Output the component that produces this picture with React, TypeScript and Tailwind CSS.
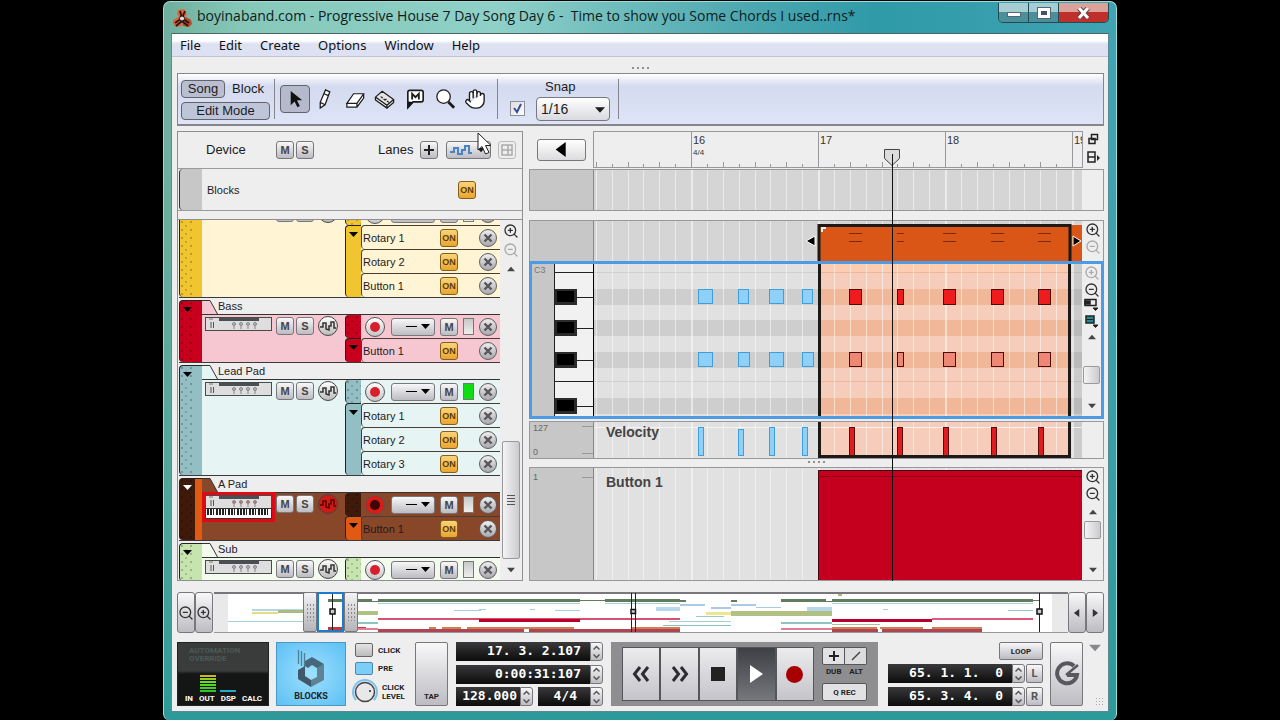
import type { ReactNode } from 'react'
import { Hand, ZoomIn, ZoomOut } from 'lucide-react'
import clsx from 'clsx'

const BAR = 127
const FIRST_BAR = 97

const gridLines = Array.from({ length: 60 }, (_, i) => {
  const step = i - 6
  return { step, x: Math.round(FIRST_BAR + (step * BAR) / 8) }
})

const silver = 'border border-[#77777c] bg-linear-to-b from-[#f8f8f9] to-[#bcbcc2]'

/* ---------- small shared controls ---------- */

function LetterButton({ children, label }: { children?: ReactNode; label: string }) {
  return (
    <button aria-label={label} className={clsx(silver, 'h-[18px] w-[18px] shrink-0 rounded-[3px] text-center text-[11px] font-bold leading-4 text-[#444]')}>
      {children}
    </button>
  )
}

function OnButton() {
  return (
    <button className="h-[18px] w-[18px] shrink-0 rounded-[3px] border border-[#80601c] bg-linear-to-b from-[#fbd376] to-[#eaa52c] text-center text-[9px] font-bold leading-[17px] text-[#5c3c04]">
      ON
    </button>
  )
}

function CloseButton() {
  return (
    <button aria-label="Delete lane" className="flex h-[18px] w-[18px] shrink-0 items-center justify-center rounded-full border border-[#5c5c60] bg-linear-to-b from-[#eee] to-[#a9a9ae]">
      <svg width="10" height="10" stroke="#55555a" strokeWidth="2.400">
        <path d="M1.500 1.500 8.500 8.500M8.500 1.500 1.500 8.500" />
      </svg>
    </button>
  )
}

function Triangle({ dir, className }: { dir: 'up' | 'down' | 'left' | 'right'; className?: string }) {
  const paths = {
    up: 'M0 7 4.500 2 9 7Z',
    down: 'M0 2 9 2 4.500 7Z',
    left: 'M7 0 7 9 1 4.500Z',
    right: 'M2 0 2 9 8 4.500Z',
  }
  return (
    <svg viewBox="0 0 9 9" fill="currentColor" className={clsx('shrink-0', className ?? 'h-[9px] w-[9px]')}>
      <path d={paths[dir]} />
    </svg>
  )
}

function ZoomButton({ kind, dim }: { kind: 'in' | 'out'; dim?: boolean }) {
  const Icon = kind === 'in' ? ZoomIn : ZoomOut
  return (
    <button aria-label={`Zoom ${kind}`} className={clsx('flex h-[17px] w-[17px] shrink-0 items-center justify-center', dim ? 'text-[#aaa]' : 'text-[#333]')}>
      <Icon size={16} strokeWidth={2} />
    </button>
  )
}

function Grip({ className }: { className?: string }) {
  return (
    <div className={clsx('flex justify-center gap-[3px]', className)}>
      {[0, 1, 2, 3].map((i) => (
        <i key={i} className="h-[2px] w-[2px] bg-[#909090]" />
      ))}
    </div>
  )
}

/* ---------- title, menu, toolbar ---------- */

function TitleBar() {
  return (
    <header className="flex h-[31px] items-start">
      <svg width="20" height="20" viewBox="0 0 20 20" className="mt-[6px] ml-px shrink-0">
        <path d="M6 2l6-1 3 5-3 5H8L5 6Z" fill="#e0623a" />
        <path d="M1 12l5-3 5 3-1 6-6 1-3-3Z" fill="#e0623a" />
        <path d="M19 12l-5-3-4 3 1 6 6 1 3-3Z" fill="#b9482a" />
        <path d="M8 3l2 7-7 5M10 10l7 5M13 3l-3 7M4 18l6-5 6 5" fill="none" stroke="#2a1410" strokeWidth="1.800" />
        <circle cx="10" cy="10.500" r="2.500" fill="#ddd" stroke="#2a1410" />
      </svg>
      <h1 className="mt-1 ml-[5px] flex-1 overflow-hidden whitespace-pre font-['Open_Sans',sans-serif] text-[14px] leading-5 text-[#0c1c20]">
        boyinaband.com - Progressive House 7 Day Song Day 6 -  Time to show you Some Chords I used..rns*
      </h1>
      <div className="mt-px flex h-[20px] overflow-hidden rounded-b-[5px] border border-t-0 border-[#244a52]">
        <button aria-label="Minimize" className="flex w-[30px] items-center justify-center border-r border-[#244a52] bg-linear-to-b from-[#a5cdd2] from-50% to-[#4b8f9a] to-50%">
          <i className="mt-1 h-[5px] w-[14px] border border-[#567] bg-white" />
        </button>
        <button aria-label="Maximize" className="flex w-[30px] items-center justify-center border-r border-[#244a52] bg-linear-to-b from-[#a5cdd2] from-50% to-[#4b8f9a] to-50%">
          <i className="h-[10px] w-[12px] border-[3px] border-white bg-[#456] outline outline-[#567]" />
        </button>
        <button aria-label="Close" className="flex w-[49px] items-center justify-center bg-linear-to-b from-[#dba29a] from-45% to-[#bf2f2c] to-50%">
          <svg width="13" height="12" strokeWidth="3" stroke="#fff">
            <path d="M2 1 11 11M11 1 2 11" stroke="#644" strokeWidth="5" />
            <path d="M2 1 11 11M11 1 2 11" />
          </svg>
        </button>
      </div>
    </header>
  )
}

function MenuBar() {
  return (
    <nav className="flex h-[23px] items-center gap-[18px] border-b border-[#c0c4d4] bg-linear-to-b from-white from-30% to-[#dde1f2] to-45% pl-2 font-['Noto_Sans',sans-serif] text-[13px] leading-5 text-[#111]">
      {['File', 'Edit', 'Create', 'Options', 'Window', 'Help'].map((item) => (
        <button key={item}>{item}</button>
      ))}
    </nav>
  )
}

const tools = [
  {
    name: 'Selection',
    icon: <path d="M7 3v15l4-4 3 6 2.500-1.200-3-6H19Z" fill="#111" stroke="none" />,
  },
  {
    name: 'Pencil',
    icon: <path d="M12 2l4.500 2-5 13.500L6.500 21l0-6ZM6.500 15l5 2.500M10.500 6l4.500 2" fill="#fff" />,
  },
  {
    name: 'Eraser',
    icon: <path d="M10 6h10.500L13.500 16H3ZM20.500 6v4.500L13.500 20H3V16M13.500 16v4" fill="#fff" />,
  },
  {
    name: 'Razor',
    icon: <path d="M1.500 9.500l7-6L20.500 12v3l-7 6-12-8.500ZM13.500 18l7-6M13.500 18v3M1.500 9.500l12 8.500M7 9l2 1.500M13.500 13.500l2 1.500M10 11.500l1.500 1 1.500-1" fill="#e4e4e6" />,
  },
  {
    name: 'Mute',
    icon: (
      <>
        <path d="M6 2.500h12q2 0 2 2v8q0 2-2 2H9.500L4 20V4.500q0-2 2-2Z" fill="#fff" strokeWidth="1.700" />
        <path d="M4 14v7l5.500-6.500" fill="#111" />
        <path d="M8.500 12V6l3.500 3.500L15.500 6v6" strokeWidth="1.900" fill="none" />
      </>
    ),
  },
  {
    name: 'Magnify',
    icon: (
      <>
        <circle cx="10" cy="9" r="7" fill="#fff" />
        <path d="M15 14.500l6 6" strokeWidth="3" />
      </>
    ),
  },
]

function Toolbar() {
  return (
    <div className="flex h-[53px] border border-[#85868c] border-b-2 bg-linear-to-b from-white via-[#d4daef] via-25% to-[#dfe5f7] text-[13px] leading-4 text-[#1c1c1c]">
      <div className="my-[5px] flex w-[97px] flex-col gap-1 border-r border-[#85868c] pt-px pl-[3px]">
        <div className="flex gap-[2px]">
          <button className="h-[18px] w-[44px] rounded-[4px] border border-[#62646c] bg-[#b9bed0]">Song</button>
          <button className="h-[18px] w-[42px]">Block</button>
        </div>
        <button className="h-[18px] w-[89px] rounded-[4px] border border-[#62646c] bg-[#bfc5d9]">Edit Mode</button>
      </div>
      <div className="my-[5px] flex items-center border-r border-[#85868c] pl-[5px] pr-[7px]">
        {tools.map((tool, i) => (
          <button
            key={tool.name}
            aria-label={tool.name}
            className={clsx('flex h-7 w-[30px] items-center justify-center', i === 0 && 'rounded-[4px] border border-[#62646c] bg-[#b4b9cc]')}
          >
            <svg width="23" height="23" viewBox="0 0 24 24" fill="none" stroke="#1c1c1c" strokeWidth="1.300">
              {tool.icon}
            </svg>
          </button>
        ))}
        <button aria-label="Hand" className="flex h-7 w-[30px] items-center justify-center text-[#1c1c1c]">
          <Hand size={22} strokeWidth={1.5} fill="#fff" />
        </button>
      </div>
      <div className="my-[5px] flex gap-[11px] border-r border-[#85868c] pr-2 pl-3">
        <span className="relative mt-[22px] h-[15px] w-[15px]">
          <input
            type="checkbox"
            aria-label="Snap to grid"
            defaultChecked
            className="peer block h-[15px] w-[15px] appearance-none border border-[#8d9098] bg-linear-to-br from-[#ddd] to-white"
          />
          <svg viewBox="0 0 15 15" className="pointer-events-none absolute inset-0 hidden peer-checked:block" fill="none" stroke="#3d4c94" strokeWidth="2">
            <path d="M4 7l3 4 4-8" />
          </svg>
        </span>
        <div>
          <label htmlFor="snap" className="block pl-[9px]">Snap</label>
          <span className="relative mt-[2px] block">
            <select id="snap" defaultValue="1/16" className="block h-[24px] w-[74px] appearance-none rounded-[4px] border border-[#77777c] bg-linear-to-b from-white to-[#d9dae0] pl-1 text-[14px] leading-5">
              <option>1/4</option>
              <option>1/8</option>
              <option>1/16</option>
              <option>1/32</option>
            </select>
            <Triangle dir="down" className="pointer-events-none absolute top-2 right-[5px] h-[10px] w-[10px]" />
          </span>
        </div>
      </div>
    </div>
  )
}

/* ---------- track list ---------- */

type Track = {
  name: string
  stripe: string
  lane: string
  param: string
  body: string
  fill: string
  params: string[]
  armed?: boolean
  level?: boolean
  scrolledOff?: boolean
}

const tracks: Track[] = [
  { name: 'Track 1', stripe: 'bg-[#f0c530]', lane: 'bg-[#f0c530]', param: 'bg-[#f0c530]', body: 'bg-[#fff4d4]', fill: '#fff4d4', params: ['Rotary 1', 'Rotary 2', 'Button 1'], scrolledOff: true },
  { name: 'Bass', stripe: 'bg-[#c8001e]', lane: 'bg-[#c8001e]', param: 'bg-[#c8001e]', body: 'bg-[#f6c6d1]', fill: '#f6c6d1', params: ['Button 1'] },
  { name: 'Lead Pad', stripe: 'bg-[#92bec4]', lane: 'bg-[#92bec4]', param: 'bg-[#92bec4]', body: 'bg-[#e6f4f3]', fill: '#e6f4f3', params: ['Rotary 1', 'Rotary 2', 'Rotary 3'], level: true },
  { name: 'A Pad', stripe: 'bg-[#3f1a0a]', lane: 'bg-[#3f1a0a]', param: 'bg-[#e05a14]', body: 'bg-[#874728]', fill: '#874728', params: ['Button 1'], armed: true },
  { name: 'Sub', stripe: 'bg-[#c6e4ae]', lane: 'bg-[#c6e4ae]', param: 'bg-[#c6e4ae]', body: 'bg-[#f3faee]', fill: '#f3faee', params: [] },
]

const speckle = 'bg-[radial-gradient(circle_at_2px_2px,#00000038_1px,transparent_1px),radial-gradient(circle_at_6px_6px,#00000028_1px,transparent_1px)] bg-[size:9px_8px]'

function Rack({ keys }: { keys?: boolean }) {
  return (
    <div className={clsx('w-[67px] shrink-0 self-start', keys && 'bg-white outline-3 outline-[#e00a14]')}>
      <svg width="67" height={keys ? 24 : 14} className="block">
        <rect x=".5" y=".5" width="66" height="13" fill="#dededf" stroke="#4a4a4a" />
        <rect x="14" y="1" width="40" height="3" fill="#4a4f56" />
        <path d="M6 5v6M8.500 5v6" stroke="#555" />
        <path d="M4 2h4" stroke="#777" />
        {[29, 36, 43, 50].map((x) => (
          <g key={x} stroke="#85858a" fill={keys ? '#d66' : '#bbb'}>
            <circle cx={x} cy="7" r="1.500" />
            <path d={`M${x} 9v3`} />
          </g>
        ))}
        {keys && (
          <>
            <rect x=".5" y="13.500" width="66" height="10" fill="#fff" stroke="#333" />
            {Array.from({ length: 21 }, (_, i) => (
              <rect key={i} x={2 + i * 3} y="14" width={i % 7 === 2 || i % 7 === 6 ? 1 : 2} height="6" fill="#222" />
            ))}
          </>
        )}
      </svg>
    </div>
  )
}

function TrackView({ track }: { track: Track }) {
  const { armed, scrolledOff } = track
  return (
    <section className={clsx('mb-[2px] flex shrink-0 border-b border-[#3a3a3a]', scrolledOff && '-mt-[33px]')}>
      <div className={clsx('flex w-[23px] shrink-0 overflow-hidden rounded-l-[4px] border-l border-t border-[#222]', track.stripe)}>
        <button aria-label={`Collapse ${track.name}`} className={clsx('flex w-[14px] justify-center pt-1', armed ? 'text-white' : 'text-black', speckle)}>
          <Triangle dir="down" />
        </button>
        {armed && <i className="ml-auto w-[7px] bg-[#e05a14]" />}
      </div>
      <div className="min-w-0 flex-1">
        <div className="flex h-[14px]">
          <svg width="16" height="14" className="shrink-0">
            <path d="M0 .5H8L15.500 14H0Z" fill={track.fill} />
            <path d="M0 .5H8L15.500 14" fill="none" stroke="#333" />
          </svg>
          {!scrolledOff && <h2 className="text-[11px] leading-3 text-[#222]">{track.name}</h2>}
        </div>
        <div className={clsx('flex', track.body)}>
          <div className="flex w-[143px] shrink-0 border-t border-[#333] pl-[3px] pt-[2px]">
            <Rack keys={armed} />
            <div className="ml-1 flex h-[18px] items-center gap-[2px]">
              <LetterButton label={`Mute ${track.name}`}>{!scrolledOff && 'M'}</LetterButton>
              <LetterButton label={`Solo ${track.name}`}>{!scrolledOff && 'S'}</LetterButton>
              <button
                aria-label={`Automate ${track.name}`}
                className={clsx('ml-[2px] flex h-[20px] w-[20px] items-center justify-center rounded-full border border-[#444]', armed ? 'bg-[#cf1a16]' : 'bg-linear-to-b from-white to-[#bbb]')}
              >
                <svg width="16" height="12" fill="none" stroke={armed ? '#5a0606' : '#333'} strokeWidth="1.500">
                  <path d="M0 7h3V3h3v6l3 1V6h2V2h3v6h2" />
                </svg>
              </button>
            </div>
          </div>
          <div className="min-w-0 flex-1">
            <div className="flex h-6 items-center border-t border-[#333]">
              <i className={clsx('h-full w-4 rounded-l-[4px] border-l border-[#222]', track.lane)}>
                <span className={clsx('block h-full', speckle)} />
              </i>
              <button
                aria-label={`Record ${track.name}`}
                className={clsx('ml-1 flex h-[20px] w-[20px] items-center justify-center rounded-full border border-[#555]', armed ? 'bg-[#d81c18]' : 'bg-linear-to-b from-white to-[#c5c5c8]')}
              >
                <i className={clsx('h-[10px] w-[10px] rounded-full', armed ? 'bg-[#3d0505]' : 'bg-[#d8202c]')} />
              </button>
              <button aria-label="Groove" className={clsx(silver, 'ml-[6px] flex h-[18px] w-[44px] items-center justify-end gap-1 rounded-[3px] pr-1 text-black')}>
                <i className="h-px w-[11px] bg-black" />
                <Triangle dir="down" />
              </button>
              <span className="ml-[5px] flex">
                <LetterButton label={`Mute ${track.name} lane`}>{!scrolledOff && 'M'}</LetterButton>
              </span>
              <i className={clsx('mx-[5px] h-[17px] w-[11px] border border-[#777]', track.level ? 'bg-[#0fdc14]' : 'bg-linear-to-b from-[#c8c8c8] to-[#eee]')} />
              <CloseButton />
            </div>
            {track.params.length > 0 && (
              <div className="flex">
                <button aria-label="Fold lanes" className={clsx('flex w-4 shrink-0 justify-center rounded-l-[4px] border-l border-t border-[#222] pt-1 text-black', track.param)}>
                  <Triangle dir="down" />
                </button>
                <ul className="flex-1">
                  {track.params.map((param) => (
                    <li key={param} className="flex h-6 items-center rounded-l-[4px] border-t border-l border-[#4a3d33] text-[11px] leading-4 text-[#1c1c1c]">
                      <span className="w-[78px] pl-px">{param}</span>
                      <OnButton />
                      <span className="ml-[21px]">
                        <CloseButton />
                      </span>
                    </li>
                  ))}
                </ul>
              </div>
            )}
          </div>
        </div>
      </div>
    </section>
  )
}

function TrackList() {
  return (
    <div className="flex w-[346px] shrink-0 flex-col border border-[#8e8e93] bg-[#efeeef] text-[#1c1c1c]">
      <div className="relative flex h-9 items-center text-[13px] leading-4">
        <span className="w-[98px] pl-[28px]">Device</span>
        <div className="flex gap-[2px]">
          <LetterButton label="All mutes off">M</LetterButton>
          <LetterButton label="All solos off">S</LetterButton>
        </div>
        <span className="ml-[64px] w-[42px]">Lanes</span>
        <button aria-label="New lane" className={clsx(silver, 'flex h-[18px] w-[18px] items-center justify-center rounded-[3px]')}>
          <svg width="10" height="10" stroke="#222" strokeWidth="2"><path d="M5 0v10M0 5h10" /></svg>
        </button>
        <button aria-label="Track automation" className={clsx(silver, 'ml-2 flex h-[18px] w-[45px] items-center gap-1 rounded-[3px] pl-[3px]')}>
          <svg width="23" height="12" fill="none" stroke="#4a84c4" strokeWidth="2"><path d="M0 8h4V4h4v6h4V6h3V2h4v7h3" /></svg>
          <Triangle dir="down" className="h-2 w-2" />
        </button>
        <button aria-label="Create pattern lane" className="ml-[7px] flex h-[18px] w-[18px] items-center justify-center rounded-[3px] border border-[#bbb]">
          <svg width="12" height="12" fill="none" stroke="#aaa" strokeWidth="1.500"><path d="M1 1h10v10H1ZM1 6h10M7 1v10" /></svg>
        </button>
        <svg width="17" height="25" className="pointer-events-none absolute top-0 left-[299px]" fill="#fff" stroke="#222">
          <path d="M1 1v17l4-3.500 3.500 7.500 3.500-1.500-3.500-7h5.500Z" />
        </svg>
      </div>
      <div className="flex h-[43px] items-center border-y border-[#9b9b9f] text-[11px] leading-4">
        <i className="ml-px h-full w-[23px] rounded-l-[4px] border-l border-[#333] bg-[#c7c7c8]" />
        <span className="ml-[5px] w-[251px]">Blocks</span>
        <OnButton />
      </div>
      <div className="h-2" />
      <div className="flex h-[361px] border-t border-[#8e8e93]">
        <div className="flex min-w-0 flex-1 flex-col overflow-hidden pl-px">
          {tracks.map((track) => (
            <TrackView key={track.name} track={track} />
          ))}
        </div>
        <div className="flex w-[22px] flex-col items-center pt-[2px] text-[#444]">
          <ZoomButton kind="in" />
          <span className="mt-[2px] flex"><ZoomButton kind="out" dim /></span>
          <Triangle dir="up" className="mt-[7px] h-2 w-2" />
          <div className="flex-1" />
          <div className="flex h-[118px] w-[18px] flex-col items-center justify-center gap-[2px] rounded-[2px] border border-[#9a9a9e] bg-linear-to-r from-[#f4f4f5] to-[#cbcbce]">
            {[0, 1, 2, 3].map((i) => <i key={i} className="h-px w-2 bg-[#555]" />)}
          </div>
          <Triangle dir="down" className="mt-[7px] mb-[6px] h-2 w-2" />
        </div>
      </div>
    </div>
  )
}

/* ---------- arrangement ---------- */

function Grid({ color = '#ebebeb' }: { color?: string }) {
  return (
    <g>
      {gridLines.map(({ step, x }) => (
        <rect key={step} x={x} y="0" width={step % 8 === 0 ? 2 : 1} height="100%" fill={color} />
      ))}
    </g>
  )
}

function Ruler() {
  return (
    <div className="flex h-[37px]">
      <div className="flex w-[64px] shrink-0 items-center pl-2">
        <button aria-label="Back to arrangement" className="flex h-[22px] w-[49px] items-center justify-center rounded-[3px] border border-[#77777c] bg-linear-to-b from-white to-[#dcdcde] text-black">
          <Triangle dir="left" className="h-[15px] w-[15px]" />
        </button>
      </div>
      <div className="min-w-0 flex-1 border border-[#98989c]">
        <svg className="block h-full w-full" fontSize="11" fill="#333">
          {gridLines.map(({ step, x }) => {
            const h = step % 8 === 0 ? 35 : step % 2 === 0 ? 5 : 3
            return <rect key={step} x={x} y={35 - h} width="1" height={h} fill="#98989c" />
          })}
          {[16, 17, 18, 19].map((bar, i) => (
            <text key={bar} x={FIRST_BAR + i * BAR + 2} y="12">{bar}</text>
          ))}
          <text x="99" y="23" fontSize="8">4/4</text>
        </svg>
      </div>
      <div className="flex w-[21px] shrink-0 flex-col items-center gap-[6px] pt-[2px]">
        <button aria-label="Detach window">
          <svg width="11" height="12" fill="#efeeef" stroke="#222" strokeWidth="1.500"><path d="M3.500 1.500h6v5h-6ZM1 5.500h6v5H1Z" /></svg>
        </button>
        <button aria-label="Show lanes">
          <svg width="14" height="12" fill="none" stroke="#222" strokeWidth="1.500"><path d="M1 1h7v10H1ZM1 6h7" /><path d="M10 4v6l3-3Z" fill="#222" stroke="none" /></svg>
        </button>
      </div>
    </div>
  )
}

const ghostNotes = [
  { x: 104, w: [15, 15], top: 6 },
  { x: 144, w: [11, 12], top: 8 },
  { x: 175, w: [15, 15], top: 6 },
  { x: 208, w: [11, 12], top: 6 },
]
const clipNotes = [
  { x: 255, w: 13 },
  { x: 303, w: 7 },
  { x: 349, w: 13 },
  { x: 397, w: 13 },
  { x: 444, w: 13 },
]
const blackRows = [25, 56, 88, 134]

function ClipRow() {
  return (
    <div className="mt-[9px] flex h-[41px] border border-b-0 border-[#98989c]">
      <i className="w-[64px] shrink-0 border-r border-[#888] bg-[#c8c7c8]" />
      <svg className="block h-full min-w-0 flex-1 bg-[#d6d5d6]">
        <Grid />
        <rect x="224" y="4" width="100%" height="36" fill="#d95616" />
        <path d="M225 40V4.500H476V40" fill="none" stroke="#1c1917" strokeWidth="3" />
        <path d="M228 11V7H232" fill="none" stroke="#eee" strokeWidth="2" />
        {clipNotes.map((n) => (
          <path key={n.x} d={`M${n.x} 12.500h${n.w}M${n.x} 20.500h${n.w}`} stroke="#7c2c08" />
        ))}
        <path d="M221 15v10l-9-5Z" stroke="#fff" />
        <path d="M479 15v10l8-5Z" stroke="#fff" />
      </svg>
      <div className="flex w-[21px] flex-col items-center">
        <ZoomButton kind="in" />
        <ZoomButton kind="out" dim />
      </div>
    </div>
  )
}

function PianoRoll() {
  return (
    <div className="flex h-[158px] border-3 border-[#4c9be4]">
      <div className="w-[23px] shrink-0 border-r border-[#222] bg-[#c8c7c8] pl-[2px] text-[9px] leading-3 text-[#777]">C3</div>
      <svg width="39" height="152" className="shrink-0 border-r border-black bg-[#f1f1f1]">
        <path d="M0 8.500h39M0 117.500h39" stroke="#222" />
        {blackRows.map((y) => (
          <g key={y}>
            <path d={`M22 ${y + 8.5}h17`} stroke="#222" />
            <rect x="0" y={y} width="22" height="16" fill="#2a2a2a" />
            <rect x="2" y={y + 2} width="17" height="11" fill="#000" />
          </g>
        ))}
      </svg>
      <svg className="block h-full min-w-0 flex-1 bg-[#e2e1e2]">
        <path d="M0 8.500h2000M0 117.500h2000" stroke="#cfcecf" />
        {blackRows.map((y) => (
          <rect key={y} x="0" y={y} width="100%" height="16" fill="#cfcecf" />
        ))}
        <rect x="224" y="0" width="253" height="152" fill="#f6cdba" />
        <rect x="224" y="0" width="253" height="8" fill="#fccdb0" />
        <path d="M224 8.500h253M224 117.500h253" stroke="#efb598" />
        {blackRows.map((y) => (
          <rect key={y} x="224" y={y} width="253" height="16" fill="#f0b898" />
        ))}
        <rect x="478" y="0" width="100%" height="152" fill="#00000018" />
        <Grid color="#ffffff80" />
        {ghostNotes.map((n) =>
          n.w.map((w, row) => (
            <rect key={`${n.x}-${row}`} x={n.x + 0.5} y={row ? 88.5 : 25.5} width={w - 1} height="14" fill="#8fd0f8" stroke="#3f9fdc" />
          )),
        )}
        {clipNotes.map((n) => (
          <g key={n.x} stroke="#4a0c0c">
            <rect x={n.x + 0.5} y="25.500" width={n.w - 1} height="15" fill="#ee1c1c" />
            <rect x={n.x + 0.5} y="88.500" width={n.w - 1} height="14" fill="#ee8874" />
          </g>
        ))}
        <path d="M225.500 0V152M475.500 0V152" stroke="#1c1917" strokeWidth="3" />
      </svg>
      <div className="flex w-[19px] shrink-0 flex-col items-center text-[#444]">
        <ZoomButton kind="in" dim />
        <ZoomButton kind="out" />
        <button aria-label="Edit modes">
          <svg width="15" height="14" fill="none" stroke="#222" strokeWidth="1.500"><path d="M1 1.500h11v6H1Z" /><path d="M1 3h5v3H1Z" fill="#222" /><path d="M9 10h5l-2.500 2.500Z" fill="#222" strokeWidth="1" /></svg>
        </button>
        <button aria-label="Note lane options" className="mt-[3px]">
          <svg width="15" height="14" stroke="#222"><path d="M2 1h8v7H2Z" fill="#25899a" strokeWidth="1.500" /><path d="M3 4.500h6" /><path d="M9 10h5l-2.500 2.500Z" fill="#222" /></svg>
        </button>
        <Triangle dir="up" className="mt-1 h-2 w-2" />
        <div className="flex-1" />
        <div className="h-[18px] w-[17px] rounded-[2px] border border-[#9a9a9e] bg-linear-to-r from-[#f4f4f5] to-[#cbcbce]" />
        <Triangle dir="down" className="mt-[18px] mb-[6px] h-2 w-2" />
      </div>
    </div>
  )
}

function VelocityLane() {
  return (
    <div className="mt-[2px] flex h-[38px] border border-[#98989c]">
      <div className="flex w-[64px] shrink-0 justify-between border-r border-[#888] bg-[#c8c7c8] pl-[3px] text-[9px] text-[#666]">
        <div className="flex h-full flex-col justify-between">
          <span className="leading-3">127</span>
          <span className="leading-3">0</span>
        </div>
        <div className="my-1 w-[11px] border-y border-[#999]" />
      </div>
      <svg className="block h-full min-w-0 flex-1 bg-[#e2e1e2]">
        <rect x="224" y="0" width="253" height="36" fill="#f6cdba" />
        <rect x="478" y="0" width="100%" height="36" fill="#00000018" />
        <Grid color="#ffffff80" />
        <path d="M0 5.500h2000" stroke="#f4f3f4" />
        <text x="12" y="15" fontSize="14" fontWeight="bold" fill="#444">Velocity</text>
        {ghostNotes.map((n) => (
          <rect key={n.x} x={n.x + 0.5} y={n.top - 0.5} width="5" height={34 - n.top} fill="#8fd0f8" stroke="#3f9fdc" />
        ))}
        {clipNotes.map((n) => (
          <rect key={n.x} x={n.x + 0.5} y="5.500" width="5" height="28" fill="#e01c20" stroke="#5c0c0c" />
        ))}
        <path d="M225.500 0V34.500H475.500V0" fill="none" stroke="#1c1917" strokeWidth="3" />
      </svg>
      <i className="w-[21px] shrink-0" />
    </div>
  )
}

function AutomationLane() {
  return (
    <div className="flex h-[114px] border border-[#98989c]">
      <div className="flex w-[64px] shrink-0 justify-between border-r border-[#888] bg-[#c8c7c8] pl-[3px] text-[9px] leading-[18px] text-[#666]">
        <span>1</span>
        <i className="mt-[9px] h-px w-[11px] bg-[#999]" />
      </div>
      <svg className="block h-full min-w-0 flex-1 bg-[#e2e1e2]">
        <Grid color="#ffffff80" />
        <text x="12" y="19" fontSize="14" fontWeight="bold" fill="#444">Button 1</text>
        <rect x="224" y="2" width="100%" height="112" fill="#c4001e" />
        <path d="M224.500 114V2.500H2000" fill="none" stroke="#3c0c10" />
        <path d="M224 8.500H2000" stroke="#8a0014" />
      </svg>
      <div className="flex w-[21px] shrink-0 flex-col items-center text-[#444]">
        <ZoomButton kind="in" />
        <ZoomButton kind="out" />
        <Triangle dir="up" className="mt-[6px] h-2 w-2" />
        <div className="flex-1" />
        <div className="h-[18px] w-[17px] rounded-[2px] border border-[#9a9a9e] bg-linear-to-r from-[#f4f4f5] to-[#cbcbce]" />
        <Triangle dir="down" className="mt-[27px] mb-[6px] h-2 w-2" />
      </div>
    </div>
  )
}

function Arrangement() {
  return (
    <div className="relative min-w-0 flex-1">
      <Ruler />
      <div className="mt-px flex h-[42px] border border-[#98989c]">
        <i className="w-[64px] shrink-0 border-r border-[#888] bg-[#c8c7c8]" />
        <svg className="block h-full min-w-0 flex-1 bg-[#d6d5d6]"><Grid /></svg>
        <i className="w-[21px] shrink-0" />
      </div>
      <ClipRow />
      <PianoRoll />
      <VelocityLane />
      <Grip className="h-2 pt-[2px]" />
      <AutomationLane />
      <svg width="16" height="432" className="pointer-events-none absolute top-[18px] left-[355px]">
        <path d="M.5.5h15v9L8 16.500.5 9.500Z" fill="#dcdcdc" stroke="#444" />
        <path d="M8.500 5V432" stroke="#111" />
      </svg>
    </div>
  )
}

/* ---------- song navigator ---------- */

// x, y, width, height, colour
const overview: [number, number, number, number, string][] = [
  [114, 7, 50, 3, '#5f7c5c'], [164, 7, 202, 3, '#5f7c5c'], [366, 8, 25, 1, '#5f7c5c'], [391, 7, 75, 3, '#5f7c5c'], [466, 8, 6, 2, '#5f7c5c'], [517, 8, 6, 2, '#5f7c5c'],
  [567, 7, 252, 3, '#5f7c5c'], [819, 8, 7, 1, '#5f7c5c'], [158, 6, 6, 3, '#fff'], [612, 6, 6, 3, '#fff'], [624, 2, 4, 2, '#b9b27a'],
  [164, 11, 202, 1, '#a9cfd0'], [391, 11, 75, 1, '#a9cfd0'], [618, 11, 201, 1, '#a9cfd0'],
  [38, 17, 65, 2, '#b4d6de'], [240, 18, 27, 1, '#a8cbe8'], [265, 17, 7, 1, '#a8cbe8'], [316, 17, 5, 1, '#a8cbe8'], [341, 18, 25, 1, '#a8cbe8'],
  [442, 15, 24, 4, '#b7d7ee'], [466, 12, 25, 2, '#a8cbe8'], [497, 15, 20, 2, '#a8cbe8'], [517, 12, 25, 2, '#a8cbe8'], [542, 15, 25, 1, '#a8cbe8'],
  [593, 15, 25, 4, '#b7d7ee'], [669, 17, 5, 1, '#a8cbe8'], [794, 18, 25, 1, '#8fc6dc'], [482, 24, 28, 1, '#9fc4d8'],
  [38, 20, 26, 2, '#e6dc84'], [64, 18, 39, 3, '#a9bb83'], [130, 19, 34, 4, '#b0c183'], [492, 20, 25, 3, '#ece68e'], [517, 19, 101, 5, '#b0c183'],
  [14, 29, 90, 1, '#a5d0cc'], [130, 30, 34, 2, '#8fc3c0'], [455, 29, 62, 1, '#a5d0cc'], [449, 33, 68, 1, '#8fc3c0'], [567, 30, 51, 2, '#8fc3c0'],
  [164, 26, 302, 2, '#d8506e'], [265, 27, 101, 3, '#b8002a'], [618, 27, 100, 3, '#b8002a'], [718, 26, 101, 2, '#e0587e'], [618, 32, 48, 1, '#b5b5a5'],
  [114, 35, 38, 3, '#c43a3a'], [215, 35, 7, 2, '#cf7f52'], [228, 35, 19, 2, '#cf7f52'], [253, 35, 107, 2, '#cf7f52'], [417, 35, 49, 2, '#cf7f52'],
  [618, 35, 45, 2, '#cf7f52'], [666, 35, 43, 2, '#cf7f52'], [718, 35, 50, 2, '#cf7f52'], [130, 36, 34, 2, '#e08090'], [567, 36, 51, 2, '#e08090'],
  [164, 37, 146, 3, '#b04452'], [315, 37, 151, 3, '#b04452'], [618, 37, 46, 3, '#b04452'], [668, 37, 100, 3, '#b04452'],
]

function Handle({ className }: { className: string }) {
  return (
    <button aria-label="Resize view" className={clsx('absolute top-0 flex h-10 w-[14px] items-center justify-center rounded-[2px] border border-[#77777c] bg-linear-to-b from-[#f4f4f5] to-[#b4b4b8]', className)}>
      <i className="h-[18px] w-2 bg-[radial-gradient(#888_1px,transparent_1px)] bg-[size:3px_4px]" />
    </button>
  )
}

function Navigator() {
  return (
    <div className="mt-[11px] flex h-[41px]">
      <div className="flex shrink-0 text-[#444]">
        {(['out', 'in'] as const).map((kind) => (
          <span key={kind} className={clsx(silver, 'flex w-[18px] items-center justify-center rounded-[3px]')}>
            <ZoomButton kind={kind} />
          </span>
        ))}
      </div>
      <div className="relative ml-px min-w-0 flex-1">
        <svg className="block h-full w-full bg-[#e9e9ea]" strokeWidth="1">
          <rect x="14" y="0" width="824" height="41" fill="#fff" />
          {overview.map(([x, y, w, h, fill], i) => (
            <rect key={i} x={x} y={y} width={w} height={h} fill={fill} />
          ))}
          <rect x="0" y="0" width="100%" height="2" fill="#77777c" />
          <rect x="0" y="40" width="100%" height="1" fill="#99999c" />
          <path d="M118.500 2v37M417.500 1v39M421.500 1v39M825.500 1v39" stroke="#222" />
          <path d="M116 17h5v5h-5ZM417 17.500h4.500v4h-4.500ZM823 17h5v5h-5Z" fill="#ccc" stroke="#111" strokeWidth="1.500" />
        </svg>
        <i className="absolute top-0 left-[103px] h-10 w-[27px] border-[2px] border-[#1f7ccc]" />
        <Handle className="left-[89px]" />
        <Handle className="left-[130px]" />
      </div>
      <div className="flex shrink-0 text-[#333]">
        <button aria-label="Scroll left" className={clsx(silver, 'flex w-[18px] items-center justify-center rounded-[3px]')}><Triangle dir="left" className="h-2 w-2" /></button>
        <button aria-label="Scroll right" className={clsx(silver, 'flex w-[18px] items-center justify-center rounded-[3px]')}><Triangle dir="right" className="h-2 w-2" /></button>
      </div>
    </div>
  )
}

/* ---------- transport ---------- */

function Lcd({ value, label, className }: { value: string; label: string; className: string }) {
  return (
    <div className="flex h-[19px]">
      <output aria-label={label} className={clsx("whitespace-pre bg-linear-to-b from-[#3a3a3c] to-[#0c0c0c] text-right font-['DejaVu_Sans_Mono',monospace] text-[13px] font-bold leading-[18px] text-white", className)}>
        {value}
      </output>
      <button aria-label={`Adjust ${label}`} className={clsx(silver, 'flex w-[13px] items-center justify-center rounded-r-[3px]')}>
        <svg width="7" height="14" fill="none" stroke="#555" strokeWidth="1.500"><path d="M.5 4.500 3.500 1.500l3 3M.5 9.500l3 3 3-3" /></svg>
      </button>
    </div>
  )
}

function TransportButton({ label, active, children }: { label: string; active?: boolean; children: ReactNode }) {
  return (
    <button
      aria-label={label}
      className={clsx('flex flex-1 items-center justify-center border border-[#55555a]', active ? 'bg-linear-to-b from-[#3f4046] to-[#77787e]' : 'bg-linear-to-b from-[#ececee] to-[#c4c4ca]')}
    >
      {children}
    </button>
  )
}

function Transport() {
  return (
    <footer className="mt-[9px] flex h-16 items-stretch font-[Roboto,sans-serif] text-[8px] font-bold leading-[9px] text-[#222]">
      <div className="flex w-[92px] shrink-0 flex-col justify-end border border-[#222] bg-linear-to-b from-[#3a3c3c] from-45% to-[#141515] to-50% px-[7px] pb-[2px] text-white">
        <div className="mb-auto pt-1 pl-1 text-[8px] leading-[8px] text-[#4b5a54]">
          <p>AUTOMATION</p>
          <p>OVERRIDE</p>
        </div>
        <div className="flex items-end pl-[15px]">
          <i className="h-[17px] w-4 bg-[repeating-linear-gradient(to_bottom,transparent_0_2px,#111_2px_3px),linear-gradient(#d8b020,#5ce020_45%,#2cc02c)]" />
          <i className="ml-1 h-[2px] w-4 bg-[#28a8c8]" />
        </div>
        <div className="flex gap-[6px] pt-[2px]">
          <span>IN</span><span>OUT</span><span>DSP</span><span>CALC</span>
        </div>
      </div>
      <button className="ml-[7px] flex w-[70px] shrink-0 flex-col items-center justify-between border border-[#4c98c4] bg-radial from-[#9ce0ff] to-[#5cc0f4] pt-[6px] pb-[3px] text-[9px] leading-3">
        <svg width="28" height="38" viewBox="0 0 28 38">
          <path d="M1.500 1v14M4.500 2v15M7.500 4v14" stroke="#4f7f96" strokeWidth="1.300" />
          <path d="M1 21l7-4v10l6 4v7L1 30Z" fill="#41586a" />
          <path d="M14 31l6-3V18l7-3v16l-13 7Z" fill="#5d8394" />
          <path d="M8 12l7-4 12 7-7 4-5-3-4 3-3-2Z" fill="#47687a" />
        </svg>
        BLOCKS
      </button>
      <div className="ml-[9px] w-14 shrink-0">
        <label className="flex h-4 items-center gap-[5px]">
          <input type="checkbox" className="h-[14px] w-[18px] appearance-none rounded-[2px] border border-[#66666a] bg-linear-to-b from-[#e4e4e6] to-[#bbb]" />
          CLICK
        </label>
        <label className="mt-[2px] flex h-4 items-center gap-[5px]">
          <input type="checkbox" defaultChecked className="h-[13px] w-[18px] appearance-none rounded-[2px] border border-[#4c88a8] bg-[#7ccdf8]" />
          PRE
        </label>
        <div className="mt-[2px] flex items-center">
          <button aria-label="Click level" className="-ml-1 h-[28px] w-[28px] shrink-0">
            <svg width="28" height="28" fill="none">
              <path d="M5 22a12 12 0 1 1 18 0" stroke="#7cc4ec" strokeWidth="2" />
              <circle cx="14" cy="14" r="9.500" fill="#e8e8ea" stroke="#444" strokeWidth="1.500" />
              <circle cx="19" cy="13" r="1" fill="#222" />
            </svg>
          </button>
          <span className="ml-[3px]">CLICK<br />LEVEL</span>
        </div>
      </div>
      <button className={clsx(silver, 'ml-1 flex w-[33px] shrink-0 items-end justify-center rounded-[2px] pb-1')}>TAP</button>

      <div className="ml-2 flex w-[147px] shrink-0 flex-col justify-between">
        <Lcd label="Song position" value="17. 3. 2.107" className="w-[134px] pr-[9px]" />
        <Lcd label="Song time" value="0:00:31:107" className="w-[134px] pr-[9px]" />
        <div className="flex justify-between">
          <Lcd label="Tempo" value="128.000" className="w-[64px] pr-[3px]" />
          <Lcd label="Time signature" value="4/4" className="w-[52px] pr-[13px]" />
        </div>
      </div>

      <div className="ml-2 flex w-[267px] shrink-0 bg-[#8e8e91] py-[5px] pl-[11px]">
        <div className="flex w-[192px]">
          <TransportButton label="Rewind">
            <svg width="18" height="16" fill="none" stroke="#2c2c30" strokeWidth="3"><path d="M8 1 2.500 8 8 15M16 1l-5.500 7 5.500 7" /></svg>
          </TransportButton>
          <TransportButton label="Fast forward">
            <svg width="18" height="16" fill="none" stroke="#2c2c30" strokeWidth="3"><path d="M2 1l5.500 7L2 15M10 1l5.500 7-5.500 7" /></svg>
          </TransportButton>
          <TransportButton label="Stop"><i className="h-[14px] w-[14px] bg-[#222]" /></TransportButton>
          <TransportButton label="Play" active>
            <svg width="13" height="18" fill="#fff"><path d="M0 0v18l13-9Z" /></svg>
          </TransportButton>
          <TransportButton label="Record"><i className="h-[17px] w-[17px] rounded-full bg-[#a80000]" /></TransportButton>
        </div>
        <div className="ml-2 flex w-[45px] flex-col">
          <div className="flex h-[18px]">
            <button aria-label="Dub" className="flex flex-1 items-center justify-center rounded-l-[2px] border border-[#55555a] bg-[#e2e2e4]">
              <svg width="10" height="10" stroke="#222" strokeWidth="2"><path d="M5 0v10M0 5h10" /></svg>
            </button>
            <button aria-label="Alt" className="flex flex-1 items-center justify-center rounded-r-[2px] border border-l-0 border-[#55555a] bg-[#dcdcde]">
              <svg width="10" height="10" stroke="#444" strokeWidth="1.500"><path d="M1 9 9 1" /></svg>
            </button>
          </div>
          <div className="flex justify-around pt-[2px]"><span>DUB</span><span>ALT</span></div>
          <button className="mt-auto h-[18px] rounded-[2px] border border-[#55555a] bg-[#e2e2e4]">Q REC</button>
        </div>
      </div>

      <div className="ml-[10px] flex w-[155px] shrink-0 flex-col justify-between">
        <button className={clsx(silver, 'h-[18px] w-[44px] self-end rounded-[2px]')}>LOOP</button>
        <div className="flex gap-px">
          <Lcd label="Left locator" value="65. 1. 1.  0" className="w-[124px] pr-[9px]" />
          <button className={clsx(silver, 'w-[17px] rounded-[2px] text-[11px] text-[#555]')}>L</button>
        </div>
        <div className="flex gap-px">
          <Lcd label="Right locator" value="65. 3. 4.  0" className="w-[124px] pr-[9px]" />
          <button className={clsx(silver, 'w-[17px] rounded-[2px] text-[11px] text-[#555]')}>R</button>
        </div>
      </div>

      <button aria-label="Groove mixer" className={clsx(silver, 'ml-[7px] flex w-[33px] shrink-0 items-center justify-center rounded-[2px]')}>
        <svg width="26" height="26" fill="none" stroke="#58585e" strokeWidth="4">
          <path d="M20 5A10 10 0 1 0 23 14H13" />
          <path d="M12 14 24 4" strokeWidth="2.500" />
        </svg>
      </button>
      <div className="ml-auto flex flex-col items-end justify-between text-[#88888c]">
        <Triangle dir="down" className="mr-[3px] h-[12px] w-[12px]" />
        <i className="h-[9px] w-[9px] bg-[radial-gradient(#aaa_1px,transparent_1px)] bg-[size:3px_3px]" />
      </div>
    </footer>
  )
}

export default function App() {
  return (
    <div className="min-h-screen bg-black px-[163px] pt-px font-['Liberation_Sans',Arial,sans-serif]">
      <div className="rounded-t-[7px] rounded-b-[6px] border-x border-t border-[#9fdcdc] bg-[linear-gradient(180deg,transparent_20%,#2c9a9880_70%,#2c9a98_100%),linear-gradient(90deg,#6fae9c_0%,#86c8b8_8%,#8fd0c8_35%,#4fa9b1_60%,#2f9aa8_75%,#3fa3b3_100%)] px-[7px] pb-2">
        <TitleBar />
        <main className="border border-t-[#4c6468] border-[#5a8a90] bg-[#efeeef]">
          <MenuBar />
          <Grip className="h-4 pt-[10px]" />
          <div className="pr-1 pb-[5px] pl-[5px]">
            <Toolbar />
            <div className="mt-[5px] flex gap-[6px]">
              <TrackList />
              <Arrangement />
            </div>
            <Navigator />
            <Transport />
          </div>
        </main>
      </div>
    </div>
  )
}
